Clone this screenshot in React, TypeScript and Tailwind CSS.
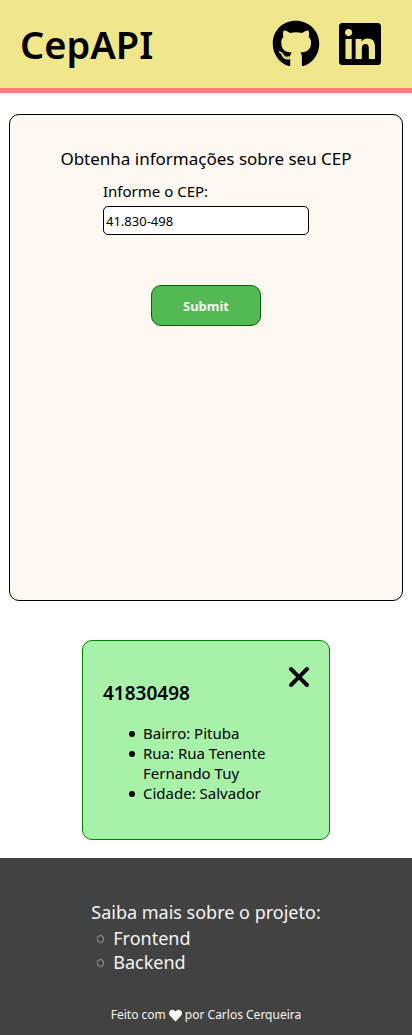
import { useState } from "react";
import { FaGithub, FaLinkedin, FaHeart } from "react-icons/fa";
import { FaXmark } from "react-icons/fa6";

const details = ["Bairro: Pituba", "Rua: Rua Tenente Fernando Tuy", "Cidade: Salvador"];

const projectLinks = [
  { label: "Frontend", href: "#frontend" },
  { label: "Backend", href: "#backend" },
];

function Header() {
  return (
    <header className="flex items-center justify-between border-b-5 border-[#ff7d7d] bg-[#f0e68c] pr-7 pl-5">
      <h1 className="py-4 text-[38px] leading-14 font-semibold">CepAPI</h1>
      <nav className="flex gap-4 text-5xl">
        <a href="#github" aria-label="GitHub">
          <FaGithub />
        </a>
        <a href="#linkedin" aria-label="LinkedIn">
          <FaLinkedin />
        </a>
      </nav>
    </header>
  );
}

function SearchForm() {
  const [cep, setCep] = useState("41.830-498");
  return (
    <form
      className="mx-[9px] mt-[21px] flex min-h-[487px] flex-col items-center rounded-[10px] border border-black bg-[#fdf8f1] px-4 pt-8"
      onSubmit={(event) => event.preventDefault()}
    >
      <h2 className="text-[17px] leading-6">Obtenha informações sobre seu CEP</h2>
      <div className="mt-2 flex w-full max-w-[206px] flex-col">
        <label htmlFor="cep" className="text-[15px] leading-6">
          Informe o CEP:
        </label>
        <input
          id="cep"
          value={cep}
          onChange={(event) => setCep(event.target.value)}
          className="mt-[3px] h-[29px] rounded-[5px] border border-black bg-white px-0.5 text-[13px] leading-5"
        />
      </div>
      <button
        type="submit"
        className="mt-[50px] h-[41px] w-[110px] rounded-[10px] border border-[#006400] bg-[#53b953] text-[13px] leading-5 font-bold text-[#f5f5f5]"
      >
        Submit
      </button>
    </form>
  );
}

function ResultCard() {
  return (
    <article className="mx-auto mt-[39px] mb-[18px] flex min-h-[200px] w-[248px] flex-col rounded-[10px] border border-[#008000] bg-[#a8f1a8] px-5 pt-5">
      <div className="flex h-[62px] justify-between">
        <h3 className="mt-5 text-[19px] leading-6 font-semibold">41830498</h3>
        <button type="button" aria-label="Remover" className="-mr-1.5 self-start text-[32px]">
          <FaXmark />
        </button>
      </div>
      <ul className="pl-[26px] text-[15px] leading-5">
        {details.map((detail) => (
          <li
            key={detail}
            className="flex gap-2 before:mt-2 before:size-1.5 before:shrink-0 before:rounded-full before:bg-black"
          >
            {detail}
          </li>
        ))}
      </ul>
    </article>
  );
}

function Footer() {
  return (
    <footer className="flex flex-col items-center bg-[#424242] pt-[42px] pb-2.5 text-[#f5f5f5]">
      <div className="text-lg leading-6">
        <p className="mb-0.5">Saiba mais sobre o projeto:</p>
        <ul className="pl-1.5">
          {projectLinks.map(({ label, href }) => (
            <li
              key={label}
              className="flex gap-[9px] before:mt-[9px] before:h-2 before:w-[7px] before:shrink-0 before:rounded-full before:border before:border-[#a0a0a0]"
            >
              <a href={href}>{label}</a>
            </li>
          ))}
        </ul>
      </div>
      <p className="mt-[31px] flex items-center gap-[3px] text-xs leading-5">
        Feito com <FaHeart className="text-[13px]" /> por Carlos Cerqueira
      </p>
    </footer>
  );
}

export default function App() {
  return (
    <div className="bg-white font-['Noto_Sans',sans-serif] text-black">
      <Header />
      <main className="flow-root">
        <SearchForm />
        <ResultCard />
      </main>
      <Footer />
    </div>
  );
}
